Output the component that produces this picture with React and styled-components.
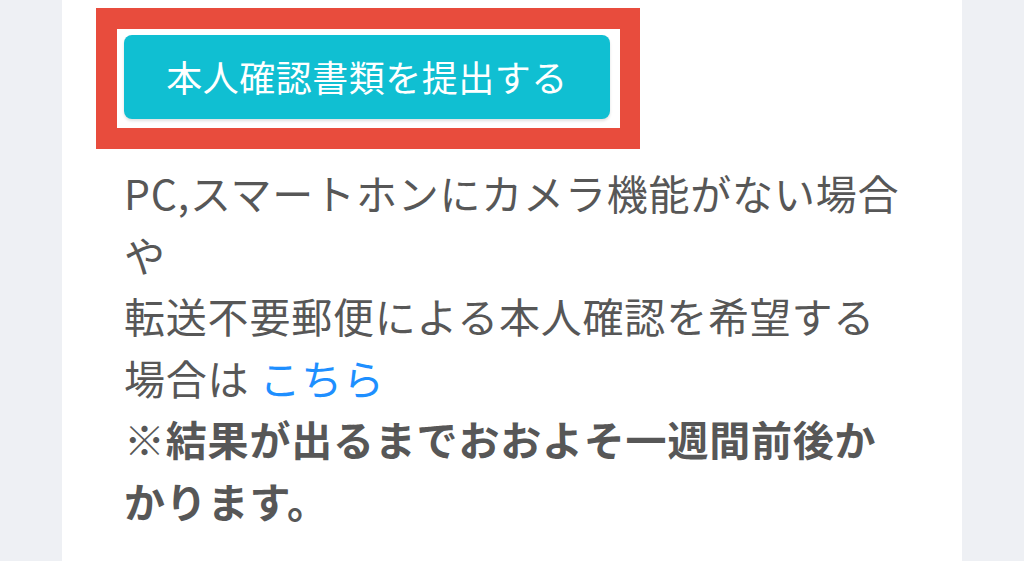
import styled, { createGlobalStyle } from 'styled-components';

const GlobalStyle = createGlobalStyle`
  html, body {
    margin: 0;
    padding: 0;
    background: #eef0f4;
  }
  body {
    font-family: "Noto Sans CJK JP", "Noto Sans", sans-serif;
  }
`;

const Page = styled.div`
  display: flex;
  height: 561px;
  overflow: hidden;
`;

const Panel = styled.main`
  width: 900px;
  margin-left: 62px;
  background: #ffffff;
  padding: 8px 0 0 34px;
  box-sizing: border-box;
`;

// markup frame drawn round the submit button
const Highlight = styled.div`
  display: inline-block;
  border: 21px solid #e84c3d;
  border-right-width: 20px;
  padding: 6px 10px 9px 7px;
  background: #ffffff;
`;

const SubmitButton = styled.a`
  display: flex;
  align-items: center;
  justify-content: center;
  width: 486px;
  height: 84px;
  border-radius: 8px;
  background: #10bfd2;
  box-shadow: 0 2px 3px rgba(0, 0, 0, 0.12);
  color: #ffffff;
  font-size: 36px;
  padding-bottom: 3px;
  box-sizing: border-box;
  text-decoration: none;
  letter-spacing: 0.5px;
`;

const Note = styled.p`
  margin: 13px 0 0 28px;
  width: 782px;
  font-size: 41px;
  line-height: 61.5px;
  letter-spacing: 0.8px;
  color: #575757;
`;

const Link = styled.a`
  color: #1e8fff;
  text-decoration: none;
`;

const Warning = styled.strong`
  font-weight: 700;
`;

function App() {
  return (
    <Page>
      <GlobalStyle />
      <Panel>
        <Highlight>
          <SubmitButton href="#">本人確認書類を提出する</SubmitButton>
        </Highlight>
        <Note>
          PC,スマートホンにカメラ機能がない場合や
          <br />
          転送不要郵便による本人確認を希望する場合は <Link href="#">こちら</Link>
          <br />
          <Warning>※結果が出るまでおおよそ一週間前後かかります。</Warning>
        </Note>
      </Panel>
    </Page>
  );
}

export default App;
